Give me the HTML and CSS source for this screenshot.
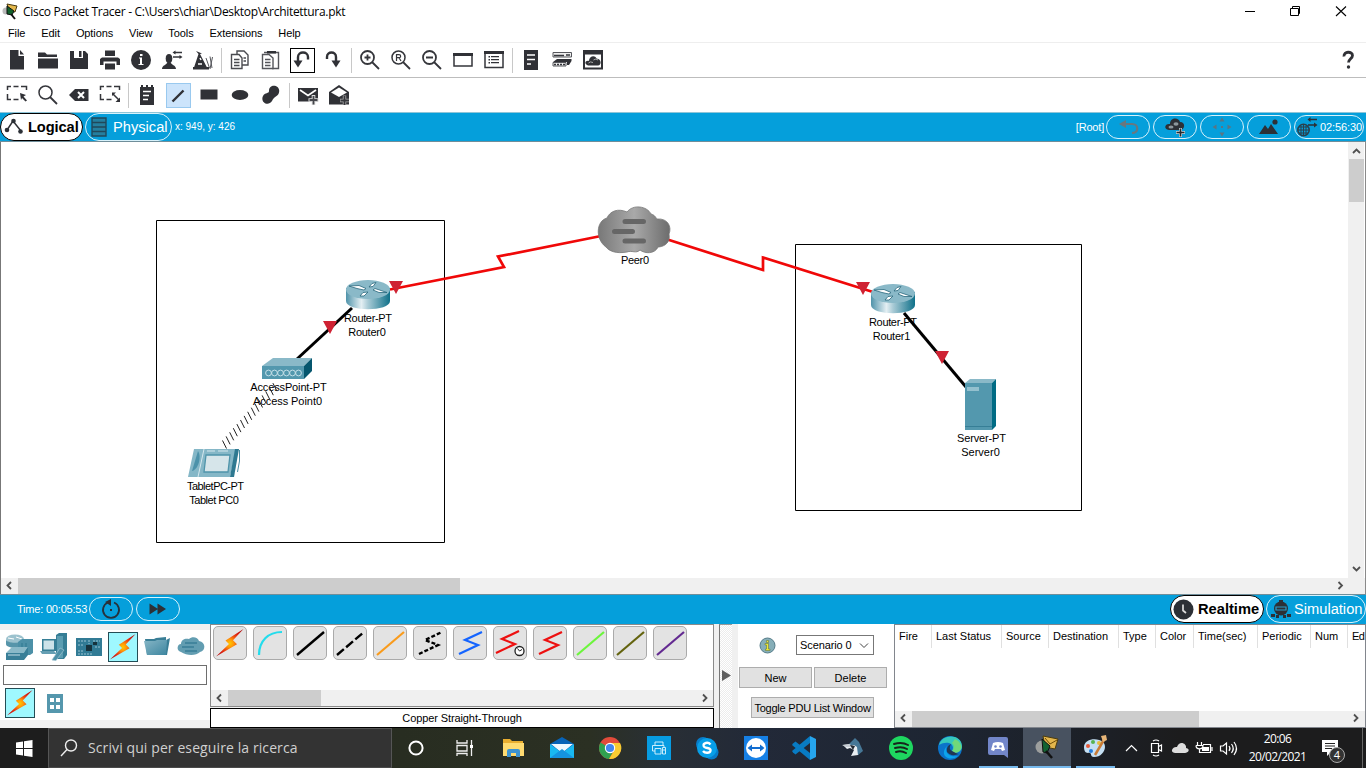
FILE: index.html
```html
<!DOCTYPE html>
<html lang="it">
<head>
<meta charset="utf-8">
<title>Cisco Packet Tracer</title>
<link rel="stylesheet" href="styles.css">
</head>
<body>
<svg class="defs" width="0" height="0">
  <defs>
    <radialGradient id="gBolt" cx=".5" cy=".52" r=".62"><stop offset="0" stop-color="#ffc800"/><stop offset=".22" stop-color="#ff9a08"/><stop offset=".45" stop-color="#f05010"/><stop offset=".7" stop-color="#d81c10"/><stop offset="1" stop-color="#b01010"/></radialGradient>
    <linearGradient id="gRouter"><stop offset="0" stop-color="#4f93aa"/><stop offset=".35" stop-color="#e4eff3"/><stop offset=".5" stop-color="#a9cbd6"/><stop offset="1" stop-color="#0f7089"/></linearGradient>
    <linearGradient id="gCloud"><stop offset="0" stop-color="#787878"/><stop offset=".5" stop-color="#a9a9a9"/><stop offset="1" stop-color="#6c6c6c"/></linearGradient>
    <linearGradient id="gFolder" x1="0" y1="0" x2="1" y2="1"><stop offset="0" stop-color="#87b6c6"/><stop offset="1" stop-color="#3d86a0"/></linearGradient>
    <symbol id="bolt" viewBox="0 0 30 30"><path d="M28.500 1 10.500 12.500 14 16 1 28.500 22 16.300 18 12.300Z" fill="url(#gBolt)"/></symbol>
    <symbol id="router" viewBox="0 0 46 32"><path d="M1 9V22C1 33 45 33 45 22V9Z" fill="url(#gRouter)"/><ellipse cx="23" cy="10.500" rx="22" ry="9.500" fill="#8ab9c8"/><path d="M4 7 14 6.500 21 9.500 19 11 12 9.500Z M42 13.500 34 13.500 28 11 30 9.500 36 11.500ZM31 3.500 28 7.500 24 8 27 4.500ZM15 17 18 13.500 23 13 19 17Z" fill="#fff" stroke="#27677c" stroke-width=".8"/></symbol>
    <symbol id="flag" viewBox="0 0 14 14"><path d="M0 0H14L7 13Z" fill="#cf2233"/></symbol>
  </defs>
</svg>

<div class="window">
  <header class="titlebar">
    <svg class="app-icon" width="17" height="18" viewBox="0 0 17 18"><circle cx="4" cy="8" r="3.500" fill="#bbb"/><path d="M5 1 15 3 13 9 7 8Z" fill="#e4b84c" stroke="#4a3a10"/><path d="M5 3 12 8 10 12 5 11Z" fill="#12612c" stroke="#111"/><path d="M9 11 13 16" stroke="#111" stroke-width="2"/></svg>
    <span class="title">Cisco Packet Tracer - C:\Users\chiar\Desktop\Architettura.pkt</span>
    <svg class="winbtns" width="120" height="23" viewBox="1240 0 120 23" fill="none" stroke="#000"><path d="M1245 10.500H1255M1290.500 7.500H1298.500V14.500H1290.500ZM1292.500 7V5.500H1299.500V12.500H1298.500"/><path d="M1336 5.500 1346 15M1346 5.500 1336 15" stroke-width="1.100"/></svg>
  </header>
  <nav class="menubar"><span>File</span><span>Edit</span><span>Options</span><span>View</span><span>Tools</span><span>Extensions</span><span>Help</span></nav>

  <div class="toolbar">
    <i><svg viewBox="0 0 22 22"><path d="M4 1H12.500V7H18V20.500H4Z"/><path d="M14 1 18 5.500H14Z"/></svg></i>
    <i><svg viewBox="0 0 22 22"><path d="M1 3.500H8L10 5.500H20V8H1ZM1 9.500H21V19.500H1Z"/></svg></i>
    <i><svg viewBox="0 0 22 22"><path d="M2 2H6V9H15V2H17L20 5V20H2Z"/><path d="M11 2H13.500V8H11Z"/></svg></i>
    <i><svg viewBox="0 0 22 22"><path d="M6 1.500H16V7H6ZM1 10 3 8.500H19L21 10V16H17.500V12.500H4.500V16H1ZM6 14.500H16V20.500H6Z"/></svg></i>
    <i><svg viewBox="0 0 22 22"><circle cx="11" cy="11" r="10"/><path d="M9 8.500H12V15H13.500V16H8.500V15H10V9.500H9ZM10 5H12.500V7H10Z" fill="#fff"/></svg></i>
    <i><svg viewBox="0 0 22 22"><ellipse cx="8" cy="9.500" rx="3.300" ry="4.500"/><path d="M1 20C1 16 6 16 6.500 13H9.500C10 16 15 16 15 20Z"/><path d="M13 3.500H21M12 8H19" stroke="#35363b" stroke-width="1.300"/><path d="M11.500 3.500 14.500 1.500V5.500ZM21.500 8 18.500 6V10Z"/></svg></i>
    <i><svg viewBox="0 0 22 22"><path d="M4 2 10 4.500 8 5 15 18.500H2L6.500 5Z"/><path d="M1 18H17V20.500H1Z"/><path d="M14 9 17.500 19M18 7.500 20 19M20.500 8 18 20" stroke="#55565b" fill="none"/><path d="M8 9 9 11M6 15H10" stroke="#fff" stroke-width="1.500"/></svg></i>
    <b></b>
    <i><svg viewBox="0 0 22 22"><g fill="#fff" stroke="#4a4b50" stroke-width="1.400"><path d="M8 2H15L19 6V16H8Z"/><path d="M2.500 5.500H10L13 9V19.500H2.500Z"/><path d="M5 10.500H10.500M5 13.500H10.500M5 16.500H10.500M14.500 9H17M14.500 12H17"/></g></svg></i>
    <i><svg viewBox="0 0 22 22"><g fill="#fff" stroke="#55565b" stroke-width="1.400"><path d="M4 3.500H18.500V19.500H12"/><path d="M2.500 5.500H9L13 9V19.500H2.500Z"/><path d="M5 10.500H10.500M5 13.500H10.500M5 16.500H10.500"/></g><path d="M7 2H16V4.500H7Z"/></svg></i>
    <i class="framed"><svg viewBox="0 0 22 22"><path d="M7 15V8C7 2 17 2 17 8V10.500" class="ln3"/><path d="M2.500 11.500H11.500L7 18.500Z"/></svg></i>
    <i><svg viewBox="0 0 22 22"><path d="M14 15V8C14 2 5 2 5 8V10" class="ln3"/><path d="M9.500 11.500H18.500L14 18.500Z"/></svg></i>
    <b></b>
    <i><svg viewBox="0 0 22 22"><circle cx="8.500" cy="8.500" r="6.500" class="ln2"/><path d="M13 13 20 20M8.500 5.500V11.500M5.500 8.500H11.500" class="ln2"/></svg></i>
    <i><svg viewBox="0 0 22 22"><circle cx="8.500" cy="8.500" r="6.500" class="ln"/><path d="M13 13 20 20" class="ln2"/><path d="M6.500 12V5.700H9C11.200 5.700 11.200 8.700 9 8.700H6.500M9 8.700 11 12" fill="none" stroke="#35363b" stroke-width="1.200"/></svg></i>
    <i><svg viewBox="0 0 22 22"><circle cx="8.500" cy="8.500" r="6.500" class="ln2"/><path d="M13 13 20 20M5 8.500H12" class="ln2"/></svg></i>
    <i><svg viewBox="0 0 22 22"><path d="M2 5H20V17H2Z" class="ln"/><path d="M1 4H21V7H1Z"/></svg></i>
    <i><svg viewBox="0 0 22 22"><path d="M2 3H20V18.500H2Z" class="ln"/><path d="M1 2H21V5H1ZM5.500 7H7V8.500H5.500ZM5.500 10H7V11.500H5.500ZM5.500 13H7V14.500H5.500ZM8 7H16V8.300H8ZM8 10H16V11.300H8ZM8 13H16V14.300H8Z"/></svg></i>
    <b></b>
    <i><svg viewBox="0 0 22 22"><path d="M4 1H18V21H4Z"/><path d="M7 6H15M7 10.500H15M7 15H11" stroke="#fff" stroke-width="1.500"/></svg></i>
    <i><svg viewBox="0 0 22 22"><path d="M2 3.500H20.500V8H2Z" fill="#eee" stroke="#55565b"/><path d="M3 6.500H13M15 6H19" stroke="#35363b" stroke-width="1.300"/><path d="M6 10H20.500V12L18 16H16V13H2Z"/><path d="M2 13.500H15V17H2Z" fill="#eee" stroke="#55565b"/><path d="M3 15.500H14" stroke="#35363b" stroke-width="1.500" stroke-dasharray="2 1"/></svg></i>
    <i><svg viewBox="0 0 22 22"><path d="M1 1H21V20.500H1Z"/><path d="M3 5.500H19V18.500H3Z" fill="#fff"/><path d="M6 16.500C1.500 15 3.500 11 7 12 7 7 13 5.500 14.500 9.500 20 10 19.500 16.500 16 16.500Z"/><path d="M6.500 14Q8 12 11 13.500M11.500 11Q14 9 16 11" stroke="#aaa" fill="none"/></svg></i>
    <span class="grow"></span>
    <svg class="help" viewBox="0 0 14 20"><path d="M3 6.500C2.500 1 11.500 1 11.500 5.500 11.500 8.500 7.500 9 7.500 12.500" fill="none" stroke="#303136" stroke-width="2.800"/><circle cx="7.500" cy="17" r="1.700"/></svg>
  </div>

  <div class="toolbar second">
    <i><svg viewBox="0 0 22 22"><path d="M1.500 6V2.500H5M7.500 2.500H12.500M15 2.500H20.500V6M1.500 10V15.500H5M7.500 15.500H12.500" class="ln"/><path d="M14 9 20 11 17.500 12.500 21 16.500 19.500 17.500 16 14 15 16Z"/></svg></i>
    <i><svg viewBox="0 0 22 22"><circle cx="8.500" cy="8.500" r="6.500" class="ln"/><path d="M13 13 20 20" class="ln2"/></svg></i>
    <i><svg viewBox="0 0 22 22"><path d="M1 11 7 5H20.500V17H7Z"/><path d="M10 8 16 14M16 8 10 14" stroke="#fff" stroke-width="2"/></svg></i>
    <i><svg viewBox="0 0 22 22"><path d="M1.500 6V2.500H5M7.500 2.500H12.500M15 2.500H20.500V6M1.500 10V15.500H5M7.500 15.500H12.500M14 10 20 16" class="ln"/><path d="M13 8.500H17L13 12ZM21 18H16.500L21 13.500Z"/></svg></i>
    <b></b>
    <i><svg viewBox="0 0 22 22"><path d="M4 3H5V1H7V3H10V1H12V3H15V1H17V3H18V21H4Z"/><path d="M7 7.500H15M7 11.500H13M7 15.500H12" stroke="#fff" stroke-width="1.700"/></svg></i>
    <i class="selected"><svg viewBox="0 0 22 22"><path d="M5.500 17.500 16.500 6.500" stroke="#303136" stroke-width="2.400"/></svg></i>
    <i><svg viewBox="0 0 22 22"><path d="M2.500 5.500H19.500V15.500H2.500Z"/></svg></i>
    <i><svg viewBox="0 0 22 22"><ellipse cx="11" cy="11" rx="8.300" ry="5"/></svg></i>
    <i><svg viewBox="0 0 22 22"><path d="M9 7C9-1 21 1 19 8.500 18 13 14 12 12 17 8 23 0 18 3 12 5 8 9 10 9 7Z"/></svg></i>
    <b></b>
    <i><svg viewBox="0 0 22 22"><path d="M1 4H21V17.500H1Z"/><path d="M3 6 11 11.500 19 6" fill="none" stroke="#fff" stroke-width="1.700"/><path d="M16.500 11V21M11.500 16H21.500" stroke="#ddd" stroke-width="3.600"/><path d="M16.500 12V20.500M12.500 16H20.500" stroke="#45464b" stroke-width="1.800"/></svg></i>
    <i><svg viewBox="0 0 22 22"><path d="M1 8 11 1 21 8V20.500H1Z"/><path d="M3 8.500 11 3.500 19 8.500 11 13Z" fill="#fff"/><path d="M16.500 11.500V21M12 16.500H21" stroke="#aaa" stroke-width="3.400"/><path d="M16.500 12V21M12.500 16.500H21" stroke="#35363b" stroke-width="1.800"/></svg></i>
  </div>

  <div class="bluebar top">
    <div class="pill active logical"><svg width="20" height="20" viewBox="0 0 20 20"><path d="M3 13 9 4 17 14" fill="none" stroke="#303136" stroke-width="1.500"/><circle cx="3" cy="13" r="2.300"/><circle cx="9.500" cy="4" r="2.300"/><circle cx="16.500" cy="14.500" r="2.300"/></svg><span>Logical</span></div>
    <div class="pill physical"><svg width="16" height="20" viewBox="0 0 16 20"><path d="M1 1H15V19H1ZM1 5.500H15M1 10H15M1 14.500H15" fill="#247f9f" stroke="#20485a" stroke-width="1.400"/></svg><span>Physical</span></div>
    <span class="coords">x: 949, y: 426</span>
    <span class="grow"></span>
    <span class="root">[Root]</span>
    <div class="oval"><svg viewBox="0 0 42 22"><path d="M18 8H25C32 8 32 17 25 17" fill="none" stroke="#687780" stroke-width="2.200"/><path d="M12 8 19 4V12Z" fill="#687780"/></svg></div>
    <div class="oval"><svg viewBox="0 0 42 22"><path d="M15 14C9 13 11 7 16 8 16 1 25 1 26 6 32 6 31 14 26 14Z"/><ellipse cx="17" cy="11" rx="2.500" ry="1.500" fill="#8c979d"/><ellipse cx="22" cy="8" rx="2.500" ry="1.700" fill="#8c979d"/><path d="M26.500 12V21M22 16.500H31" stroke="#c4d8df" stroke-width="3"/><path d="M26.500 12.500V20.500M22.500 16.500H30.500" stroke="#252a30" stroke-width="1.600"/></svg></div>
    <div class="oval"><svg viewBox="0 0 42 22" fill="#5a7584"><path d="M21 1.500 23.500 5.500H18.500ZM21 20.500 23.500 16.500H18.500ZM11.500 11 15.500 8.500V13.500ZM30.500 11 26.500 8.500V13.500ZM20 10H22V12H20Z"/></svg></div>
    <div class="oval"><svg viewBox="0 0 42 22"><path d="M11 18 17 9 20 13 23 8 30 18Z"/><circle cx="27" cy="6" r="2.600"/></svg></div>
    <div class="oval clock"><svg width="22" height="20" viewBox="0 0 22 20"><circle cx="7.500" cy="13" r="5.700" fill="none" stroke="#2b3f4b" stroke-width="1.500"/><path d="M2 13H13M3 10H12M3 16H12M7.500 7.500V18.500M5 8.500V17.500M10 8.500V17.500" stroke="#2b3f4b"/><path d="M13 2.500H21M12 8H19" stroke="#2b3038" stroke-width="1.500"/><path d="M11.500 2.500 14.500 0V5ZM21.500 8 18 5.500V10.500Z"/></svg><span>02:56:30</span></div>
  </div>

  <main class="workspace">
    <div class="work-row">
      <svg class="canvas" viewBox="1 142 1347 436" width="1347" height="436">
        <g fill="none" stroke="#000"><path d="M156.500 220.500H444.500V542.500H156.500Z"/><path d="M795.500 244.500H1081.500V510.500H795.500Z"/></g>
        <g fill="none" stroke="#f00808" stroke-width="2.700"><path d="M390 289.500 504 267 498 256.500 601 236"/><path d="M666 239 763 270 763 257.500 873 292"/></g>
        <path d="M352 308 297 359" stroke="#000" stroke-width="3"/>
        <g class="lbl"><text x="368" y="322" textLength="48">Router-PT</text><text x="367" y="336" textLength="37.500">Router0</text><text x="288.500" y="391" textLength="76.500">AccessPoint-PT</text><text x="287.500" y="405" textLength="69">Access Point0</text><text x="215.500" y="490" textLength="57">TabletPC-PT</text><text x="214" y="504" textLength="49.500">Tablet PC0</text><text x="635" y="264" textLength="28">Peer0</text><text x="893" y="326" textLength="48">Router-PT</text><text x="891.500" y="340" textLength="37.500">Router1</text><text x="981.500" y="442" textLength="49">Server-PT</text><text x="980.500" y="456" textLength="38.500">Server0</text></g>
        <path d="M904 313 966 387" stroke="#000" stroke-width="3"/>
        <path d="M222.500 440.500l4 8m-.400-12.100l4 8m-.400-12.100l4 8m-.400-12.100l4 8m-.400-12.100l4 8m-.400-12.100l4 8m-.400-12.100l4 8m-.400-12.100l4 8m-.400-12.100l4 8m-.400-12.100l4 8m-.400-12.100l4 8m-.400-12.100l4 8m-.400-12.100l4 8m-.400-12.100l4 8m-.400-12.100l4 8" fill="none" stroke="#222"/>
        <use href="#router" x="345" y="279" width="46" height="32"/>
        <use href="#router" x="870" y="283" width="46" height="32"/>
        <use href="#flag" x="389" y="281" width="14" height="14"/>
        <use href="#flag" x="323" y="321" width="14" height="14"/>
        <use href="#flag" x="856" y="282" width="14" height="14"/>
        <use href="#flag" x="935" y="351" width="14" height="14"/>
        <path d="M262 366 273 358H312L304 366Z" fill="#8ab9c8"/><path d="M262 366H304V379H262Z" fill="#5398ae"/><path d="M304 366 312 358V371L304 379Z" fill="#05566e"/>
        <g fill="none" stroke="#c4dfe8"><circle cx="268.500" cy="373" r="2.900"/><circle cx="274.500" cy="373" r="2.900"/><circle cx="280.500" cy="373" r="2.900"/><circle cx="286.500" cy="373" r="2.900"/><circle cx="292.500" cy="373" r="2.900"/><circle cx="298.500" cy="373" r="2.900"/></g>
        <path d="M194 449H236L230 477H188Z" fill="#85b7c7"/><path d="M235 449H239L234 477H230Z" fill="#2e7991"/><path d="M239.500 450V461L237.500 472" fill="none" stroke="#4b8fa6"/><path d="M198 451C202 457 198 470 192 471Z" fill="#4c92aa"/><path d="M204 449 198 477M207 451H215M218 451H228" stroke="#d6e8ee"/><path d="M206 455H230L228 472H204Z" fill="#d6e5ea" stroke="#4f94aa" stroke-width="1.300"/>
        <path d="M606 247C595 239 596 221 607 218 610 211 618 208 627 212 633 204 647 206 651 214 655 215 656 218 657 219 668 218 672 227 669 234 671 245 661 247 658 247 655 254 645 254 640 250 636 254 632 250 627 252 616 254 609 251 606 247Z" fill="url(#gCloud)" stroke="#777" stroke-width=".8"/>
        <path d="M625 221.500H643.500M614.500 231.500H632.500M625 241H643.500" stroke="#666" stroke-width="5" stroke-linecap="round"/>
        <path d="M965 383 970 379H996L992 383Z" fill="#8ab9c8"/><path d="M965 383H992V430H965Z" fill="#5398ae"/><path d="M992 383 996 379V426L992 430Z" fill="#006b84"/><path d="M967 387H979V391H967Z" fill="#93c0ce"/><path d="M965 426.500H992" stroke="#367e96"/>
      </svg>
      <div class="vscroll"><svg width="16" height="17" viewBox="0 0 16 17"><path d="M5 11 8.500 7.500 12 11" class="arr"/></svg><div class="vthumb"></div><span class="grow"></span><svg width="16" height="17" viewBox="0 0 16 17"><path d="M5 6 8.500 9.500 12 6" class="arr"/></svg></div>
    </div>
    <div class="hscroll"><svg width="17" height="16" viewBox="0 0 17 16"><path d="M10 4 6.500 7.500 10 11" class="arr"/></svg><div class="hthumb"></div><span class="grow"></span><svg width="17" height="16" viewBox="0 0 17 16"><path d="M6.500 4 10 7.500 6.500 11" class="arr"/></svg><span class="corner"></span></div>
  </main>

  <div class="bluebar lower">
    <span class="time">Time: 00:05:53</span>
    <div class="oval"><svg viewBox="0 0 42 22"><path d="M18 4.500A8 8 0 1 0 24 4.500" fill="none" stroke="#26323c" stroke-width="1.800"/><path d="M15 4 21 1V8ZM20 11H22V13H20Z"/></svg></div>
    <div class="oval"><svg viewBox="0 0 42 22"><path d="M12.500 5.500 21 11 12.500 16.500ZM20.500 5.500 29 11 20.500 16.500Z"/></svg></div>
    <span class="grow"></span>
    <div class="pill active realtime"><svg width="21" height="21" viewBox="0 0 21 21"><circle cx="10.500" cy="10.500" r="10"/><path d="M10 5.500V11.500L13 14" fill="none" stroke="#ddd" stroke-width="1.700"/></svg><span>Realtime</span></div>
    <div class="pill simulation"><svg width="20" height="20" viewBox="0 0 20 20"><path d="M0 15H4V18H0ZM5 16H8V19H5ZM12 16H15V19H12ZM16 15H20V18H16Z"/><circle cx="10" cy="9.500" r="7"/><path d="M8 1H12V4H8Z"/><path d="M5 8H15V11H5Z" stroke="#2b9cc8" stroke-width="1.200"/></svg><span>Simulation</span></div>
  </div>

  <section class="bottom">
    <div class="devices">
      <div class="devwrap">
        <div class="devrow">
          <svg viewBox="0 0 30 30"><ellipse cx="10" cy="7" rx="9" ry="4.500" fill="#9cc2ce"/><path d="M1 7V12C1 17 19 17 19 12V7C19 12 1 12 1 7Z" fill="#5795aa"/><path d="M3 6 9 7M11 5 17 7" stroke="#fff"/><path d="M13 10 17 7H28V21L25 23H13Z" fill="#4c90a7"/><path d="M17 11V20M21 11V20" stroke="#2f7890"/><path d="M1 21 7 15H23L19 21Z" fill="#8ab9c8"/><path d="M1 21H19V28H1ZM19 21 23 15V23L19 28Z" fill="#397f98"/><path d="M3 23H15" stroke="#c5dfe7"/></svg>
          <svg viewBox="0 0 30 30"><path d="M17 3 20 1H28V23L25 27H17Z" fill="#367e96"/><path d="M18 4H24V26H18Z" fill="#5b9db2"/><path d="M3 7H17V19H3Z" fill="#367e96"/><path d="M4.500 8.500H15V17.500H4.500Z" fill="#cce2e9"/><path d="M1 19H15L18 22H3Z" fill="#669fb3"/><path d="M13 28 21 16 25 18 17 28.500Z" fill="#4c90a7" stroke="#9cc2ce" stroke-width=".7"/></svg>
          <svg viewBox="0 0 30 30"><path d="M2 6H28V24H2Z" fill="#317b95"/><path d="M4 9H12M15 8V12M19 9H26M4 13H9M21 15H26M4 19H9M4 22H18" stroke="#9bc5d3" stroke-dasharray="2 1"/><path d="M12 13H18V19H12ZM19 10H23V13H19Z" fill="#17333d"/></svg>
          <span class="boltbox"><svg viewBox="0 0 30 30"><use href="#bolt"/></svg></span>
          <svg viewBox="0 0 30 30"><path d="M3 7H12L14 6 24 5V8L28 6 25 23H5Z" fill="#397e96"/><path d="M2 9H13L15 8H25L24 23H5Z" fill="url(#gFolder)"/></svg>
          <svg viewBox="0 0 30 30"><path d="M5 20C0 19 1 12 5 12 5 7 10 6 13 7 16 4 22 5 23 9 30 10 30 19 24 20 20 24 11 24 5 20Z" fill="#629db1"/><path d="M9 11H21M6 15H18M9 19H21" stroke="#397e96" stroke-width="1.600"/></svg>
        </div>
        <div class="filter"></div>
        <div class="devrow second-row"><span class="boltbox"><svg viewBox="0 0 30 30"><use href="#bolt"/></svg></span><svg class="grid-icon" viewBox="0 0 16 19"><path d="M0 0H16V19H0Z" fill="#5597ad"/><path d="M3 4H7V8H3ZM9 4H13V8H9ZM3 11H7V15H3ZM9 11H13V15H9Z" fill="#fff"/></svg></div>
      </div>
    </div>

    <div class="cables">
      <div class="cable-list">
        <div class="cable-row">
          <span><svg viewBox="0 0 32 32"><use href="#bolt" x="1" y="1" width="30" height="30"/></svg></span>
          <span><svg viewBox="0 0 32 32"><path d="M5 28C5 14 14 5 28 5" stroke="#23dcec" stroke-width="2.200"/></svg></span>
          <span><svg viewBox="0 0 32 32"><path d="M3 28 30 5" stroke="#000" stroke-width="2.400"/></svg></span>
          <span><svg viewBox="0 0 32 32"><path d="M3 28 30 5" stroke="#000" stroke-width="2.400" stroke-dasharray="9 3"/></svg></span>
          <span><svg viewBox="0 0 32 32"><path d="M3 28 30 5" stroke="#f99b1c" stroke-width="2.200"/></svg></span>
          <span><svg viewBox="0 0 32 32"><path d="M5 27 24 18 11 13 28 5" stroke="#000" stroke-width="2.400" stroke-dasharray="4 2"/></svg></span>
          <span><svg viewBox="0 0 32 32"><path d="M5 27 24 18 11 13 28 5" stroke="#1464ff" stroke-width="2.200"/></svg></span>
          <span><svg viewBox="0 0 32 32"><path d="M2 26 21 17 8 12 25 4" stroke="#ed1010" stroke-width="2.200"/><circle cx="25.500" cy="24" r="4.500" fill="#fff" stroke="#222" stroke-width="1.300"/><path d="M23.500 21.500 25.500 24 28 22.500" stroke="#222"/></svg></span>
          <span><svg viewBox="0 0 32 32"><path d="M5 27 24 18 11 13 28 5" stroke="#ed1010" stroke-width="2.200"/></svg></span>
          <span><svg viewBox="0 0 32 32"><path d="M3 28 30 5" stroke="#6cf53c" stroke-width="2.200"/></svg></span>
          <span><svg viewBox="0 0 32 32"><path d="M3 28 30 5" stroke="#64640f" stroke-width="2.200"/></svg></span>
          <span><svg viewBox="0 0 32 32"><path d="M3 28 30 5" stroke="#632a91" stroke-width="2.200"/></svg></span>
        </div>
        <div class="hscroll"><svg width="17" height="16" viewBox="0 0 17 16"><path d="M10 4.500 6.500 8 10 11.500" class="arr"/></svg><div class="cthumb"></div><span class="grow"></span><svg width="17" height="16" viewBox="0 0 17 16"><path d="M7 4.500 10.500 8 7 11.500" class="arr"/></svg></div>
      </div>
      <div class="cable-name">Copper Straight-Through</div>
    </div>

    <div class="splitter"><svg width="9" height="11" viewBox="0 0 9 11"><path d="M0 0 9 5.500 0 11Z" fill="#606060"/></svg></div>

    <div class="scenario">
      <div class="sc-top"><svg width="17" height="17" viewBox="0 0 17 17"><circle cx="8.500" cy="8.500" r="7.500" fill="#86aeb8" stroke="#557c89"/><path d="M6 6.500H9.500V12H11V13.500H6.500V12H7.500V8H6ZM7.500 3.500H9.500V5.500H7.500Z" fill="#ede936" stroke="#5d6b30" stroke-width=".5"/></svg><div class="select"><span>Scenario 0</span><svg width="10" height="7" viewBox="0 0 10 7"><path d="M1 1.500 5 5.500 9 1.500" fill="none" stroke="#444"/></svg></div></div>
      <div class="sc-btns"><div class="btn">New</div><div class="btn">Delete</div></div>
      <div class="btn toggle">Toggle PDU List Window</div>
    </div>

    <div class="pdu">
      <div class="thead"><span>Fire</span><span>Last Status</span><span>Source</span><span>Destination</span><span>Type</span><span>Color</span><span>Time(sec)</span><span>Periodic</span><span>Num</span><span>Ed</span></div>
      <div class="hscroll"><svg width="17" height="16" viewBox="0 0 17 16"><path d="M10 3.500 6.500 7 10 10.500" class="arr"/></svg><div class="pthumb"></div><span class="grow"></span><svg width="17" height="16" viewBox="0 0 17 16"><path d="M6 3.500 9.500 7 6 10.500" class="arr"/></svg></div>
    </div>
  </section>
</div>

<footer class="taskbar">
  <div class="start"><svg width="17" height="17" viewBox="0 0 17 17"><path d="M0 2.500 7 1.500V8H0ZM8 1.300 16.500 0V8H8ZM0 9H7V15.500L0 14.500ZM8 9H16.500V17L8 15.700Z" fill="#fff"/></svg></div>
  <div class="search"><svg width="18" height="18" viewBox="0 0 18 18"><circle cx="11" cy="6.500" r="5.500" fill="none" stroke="#eee" stroke-width="1.400"/><path d="M7 10.500 1 17" stroke="#eee" stroke-width="1.400"/></svg><span>Scrivi qui per eseguire la ricerca</span></div>
  <div class="apps">
    <a><svg viewBox="0 0 24 24"><circle cx="12" cy="12" r="6.600" fill="none" stroke="#fff" stroke-width="2"/></svg></a>
    <a><svg viewBox="0 0 24 24"><path d="M4 4V7H14V4M4 20V17.500H14V20M4 9.500H14V15H4ZM18.500 4V20" fill="none" stroke="#eee" stroke-width="1.300"/><path d="M17 9H20V12H17Z" fill="#fff"/></svg></a>
    <a><svg viewBox="0 0 24 24"><path d="M2 3H9L11 5H22V20H2Z" fill="#e9ae30"/><path d="M2 7H23V20H2Z" fill="#ffdb70"/><path d="M6 21V15Q6 13 8 13H17Q19 13 19 15V21H15V17H10V21Z" fill="#3d93d0"/></svg></a>
    <a><svg viewBox="0 0 24 24"><path d="M0 8 12 1 24 8V22H0Z" fill="#0763b7"/><path d="M1 8H23L12 17Z" fill="#eef8ff"/><path d="M0 8 12 17 24 8V22H0Z" fill="#19b8f0"/><path d="M0 22 12 13 24 22Z" fill="#1593df"/></svg></a>
    <a><svg viewBox="0 0 24 24"><circle cx="12" cy="12" r="11" fill="#e24b3b"/><path d="M12 12 2.500 6.500A11 11 0 0 0 11 23L16 14Z" fill="#30a150"/><path d="M12 7H22A11 11 0 0 1 11 23L16.500 14Z" fill="#f8cb31"/><circle cx="12" cy="12" r="5.200" fill="#fff"/><circle cx="12" cy="12" r="4.100" fill="#4386ef"/></svg></a>
    <a><svg viewBox="0 0 24 24"><path d="M0 0H24V24H0Z" fill="#079be1"/><path d="M8 9V6H16V9M5.500 15V9.500H17V11M8 15H5.500M8 12.500H14V18H8ZM15.500 11.500H18.500V18H15.500ZM16 14H18" fill="none" stroke="#dff5ff" stroke-width=".9"/></svg></a>
    <a><svg viewBox="0 0 24 24"><circle cx="8" cy="8" r="7" fill="#087cc9"/><circle cx="16.500" cy="16.500" r="7" fill="#087cc9"/><circle cx="12" cy="12" r="10" fill="#079fe8"/><path d="M15.500 8.500C13 5.500 8 7 8.700 10 9.500 13 16 11 15.500 14.500 15 17.500 10 17.500 8 15" fill="none" stroke="#fff" stroke-width="2.400"/></svg></a>
    <a><svg viewBox="0 0 24 24"><path d="M0 0H24V24H0Z" fill="#1680e6"/><circle cx="12" cy="12" r="10" fill="#fff"/><path d="M3.500 12 8 8.500V11H16V8.500L20.500 12 16 15.500V13H8V15.500Z" fill="#116dd0"/></svg></a>
    <a><svg viewBox="0 0 24 24"><path d="M1 7.500 3.500 5.500 18 17V24L0 9Z" fill="#087bc3"/><path d="M1 16.500 3.500 18.500 18 7V0L0 15Z" fill="#087bc3"/><path d="M18 0 24 3V21L18 24Z" fill="#26a5ed"/></svg></a>
    <a><svg viewBox="0 0 24 24"><path d="M2 9 9 8 14 3 17 7 20 14 17 19 10 20 13 14 9 12 6 13Z" fill="#e9eef2"/><path d="M8 8 14 2 18 6 22 15 17 19 16 11 13 9 9 10Z" fill="#467796"/><path d="M1 9 9 8 11 11 5 11Z" fill="#c5cbd2"/><path d="M9 9 14 10 12 14Z" fill="#252a32"/></svg></a>
    <a><svg viewBox="0 0 24 24"><circle cx="12" cy="12" r="12" fill="#1ed760"/><path d="M5 8Q13 5.500 19 9M6 12Q13 10 18 13M7 16Q12 14 17 17" fill="none" stroke="#17251d" stroke-width="2" stroke-linecap="round"/></svg></a>
    <a><svg viewBox="0 0 24 24"><circle cx="12" cy="12" r="12" fill="#0b73ca"/><path d="M1 9C4-3 24-2 24 10 24 17 16 17 14 15 18 8 9 4 1 9Z" fill="#36c7bd"/><path d="M17 3C27 8 24 17 17 17L14 15Q18 11 14 7Z" fill="#71d879"/><path d="M10 9C5 14 10 22 20 20 10 27 0 18 10 9Z" fill="#0ca4ec"/><path d="M14 15Q10 13 13 8 8 10 9 16 13 21 21 18 19 18 14 15Z" fill="#203653"/></svg></a>
    <a class="running"><svg viewBox="0 0 24 24"><path d="M4 2H20Q22 2 22 4V23L18 20H4Q2 20 2 18V4Q2 2 4 2Z" fill="#7286c9"/><path d="M7 8Q12 6 17 8L19 15 16 16 15 14H9L8 16 5 15Z" fill="#fff"/><circle cx="9.500" cy="11.500" r="1.300" fill="#7286c9"/><circle cx="14.500" cy="11.500" r="1.300" fill="#7286c9"/></svg></a>
    <a class="running current"><svg viewBox="0 0 24 24"><circle cx="7" cy="12" r="6.500" fill="#9c9e9d"/><path d="M8 1 23 4 20 14 10 12Z" fill="#e3b64c" stroke="#4d3c0d"/><path d="M10 3 15 9 22 5" fill="none" stroke="#6d4c08"/><path d="M7 4 15 11 12 18 8 17Z" fill="#136332" stroke="#111"/><path d="M11 16 17 23" stroke="#111" stroke-width="2.500"/></svg></a>
    <a class="running"><svg viewBox="0 0 24 24"><path d="M1 12C1 4 14 2 20 7 25 12 20 22 11 22 6 22 10 17 5 18 2 18 1 15 1 12Z" fill="#c5e0f4"/><circle cx="5" cy="11" r="2" fill="#e55a3a"/><circle cx="10" cy="7" r="2" fill="#58b350"/><circle cx="16" cy="8" r="2" fill="#e8bd3b"/><circle cx="8" cy="16" r="2" fill="#237bdb"/><path d="M22 3 12 20" stroke="#c87b37" stroke-width="2.500"/><path d="M18 1 23 0 24 5 20 7Z" fill="#e6b578"/></svg></a>
  </div>
  <span class="grow"></span>
  <svg class="tray" width="120" height="40" viewBox="1125 728 120 40" fill="none" stroke="#fff" stroke-width="1.200"><path d="M1129 751 1134.500 745.500 1140 751"/><path d="M1154.500 743.500H1161.500V752.500H1154.500ZM1161.500 746.500 1164.500 745V751L1161.500 749.500M1156 741Q1159 739 1162 741M1156 755Q1159 757 1162 755"/><path d="M1178 753C1172 752 1176 746 1180 747 1182 740 1190 743 1189 748 1194 749 1191 753 1188 753Z" fill="#ddd" stroke="none"/><path d="M1206 744.500H1213.500V752.500H1203M1200.500 742V745M1204.500 742V745M1199 745.500H1206C1206 750 1199 750 1199 745.500M1202.500 749V753M1215 747V751"/><path d="M1205 747H1212V751H1205Z" fill="#fff" stroke="none"/><path d="M1223.500 746V751H1226L1229.500 754V743L1226 746ZM1232 746Q1234 748.500 1232 751M1234.500 744Q1238 748.500 1234.500 753M1237 742Q1242 748.500 1237 755"/></svg>
  <div class="datetime"><span>20:06</span><span>20/02/2021</span></div>
  <div class="notify"><svg width="17" height="17" viewBox="0 0 17 17"><path d="M0 0H16V12H9L5 16V12H0Z" fill="#fff"/><path d="M3 3.500H13M3 6H13M3 8.500H10" stroke="#252525"/></svg><span class="badge">4</span></div>
</footer>
</body>
</html>
```

FILE: styles.css
```css
* { box-sizing: border-box; }
body { margin: 0; width: 1366px; height: 768px; overflow: hidden; background: #fff; color: #000; font: 11px/14px "Liberation Sans", sans-serif; display: flex; flex-direction: column; }
svg { display: block; flex: none; }
.defs { position: absolute; }
.grow { flex: 1; }
.window { height: 728px; display: flex; flex-direction: column; }
.titlebar { height: 24px; display: flex; align-items: center; padding-left: 2px; }
.title { margin-left: 4px; flex: 1; font: 12px/16px "Open Sans", sans-serif; letter-spacing: -0.3px; }
.winbtns { margin-right: 6px; }
.menubar { height: 19px; border-bottom: 1px solid #eee; display: flex; padding: 2px 0 0 8px; gap: 16px; letter-spacing: -0.1px; }
.toolbar { height: 35px; border-bottom: 1px solid #bdbdbd; display: flex; align-items: center; padding-left: 1.5px; fill: #303136; }
.toolbar.second { border-bottom-color: #8fc5d8; }
.toolbar i { width: 31px; height: 26px; flex: none; display: flex; align-items: center; justify-content: center; }
.toolbar i svg { width: 22px; height: 22px; }
.toolbar b { width: 6px; flex: none; height: 25px; border-left: 1px solid #c8c8c8; margin-left: 2px; margin-right: -2px; }
.toolbar i.framed, .toolbar i.selected { width: 25px; height: 25px; margin: 0 3px; border: 1px solid #000; }
.toolbar i.selected { background: #cce4fb; border-color: #99c9ef; }
.ln { fill: none; stroke: #35363b; stroke-width: 1.5; }
.ln2 { fill: none; stroke: #35363b; stroke-width: 1.8; }
.ln3 { fill: none; stroke: #303136; stroke-width: 2.4; }
.arr { fill: none; stroke: #505050; stroke-width: 1.8; }
.help { width: 14px; height: 20px; margin-right: 11px; }
.bluebar { height: 29px; flex: none; background: #059fdb; color: #fff; display: flex; align-items: center; fill: #2c3036; }
.bluebar.top { border-bottom: 1px solid #708e9a; }
.bluebar.lower { height: 30px; border-top: 1px solid #708e9a; padding-bottom: 1px; }
.pill { height: 28px; border: 1px solid #d8f2fb; border-radius: 14px; display: flex; align-items: center; font-size: 14.67px; line-height: 18px; white-space: nowrap; }
.pill.active { background: #fff; border: 1.5px solid #000; color: #000; font-weight: bold; }
.logical { width: 83px; padding-left: 3px; gap: 4px; letter-spacing: -0.1px; }
.physical { width: 87px; margin-left: 2px; padding-left: 5px; gap: 6px; }
.coords { margin-left: 3px; font-size: 10px; }
.oval { width: 44px; height: 24px; flex: none; border: 1px solid #d8f2fb; border-radius: 12px; margin-right: 3px; display: flex; align-items: center; }
.root { margin-right: 2px; letter-spacing: -0.2px; }
.oval.clock { width: 70px; margin-right: 2px; padding-left: 1px; }
.clock span { margin-left: 2px; letter-spacing: -0.1px; }
.workspace { height: 452px; flex: none; border-left: 1px solid #777; border-right: 1px solid #8a8a8a; display: flex; flex-direction: column; }
.work-row { height: 436px; display: flex; }
.canvas .lbl { font-size: 11px; text-anchor: middle; }
.vscroll { width: 16px; height: 436px; background: #f0f0f0; display: flex; flex-direction: column; }
.vthumb { height: 43px; background: #cdcdcd; margin: 0 0 0 1px; }
.hscroll { height: 16px; background: #f0f0f0; display: flex; flex: none; }
.hthumb { width: 442px; background: #cdcdcd; }
.corner { width: 16px; }
.time { margin-left: 17px; width: 71px; letter-spacing: -0.2px; white-space: nowrap; margin-right: 1px; }
.realtime { width: 94px; padding-left: 2px; gap: 4px; margin-right: 2px; }
.simulation { width: 100px; padding-left: 4px; gap: 3px; }
.bottom { height: 104px; display: flex; flex: none; background: #f0f0f0; }
.devices { width: 210px; flex: none; padding-top: 6px; }
.devwrap { background: #fff; height: 90px; padding: 2px 3px; }
.devrow { display: flex; align-items: center; height: 30px; padding-left: 2px; gap: 4.3px; }
.devrow svg { width: 30px; height: 30px; }
.boltbox { width: 30px; height: 30px; flex: none; border: 1px solid #244d56; background: #9ff8ff; }
.devrow .boltbox svg { width: 28px; height: 28px; }
.filter { height: 20px; width: 204px; border: 1px solid #6e6e6e; margin: 3px 0; background: #fff; }
.devrow .grid-icon { width: 16px; height: 19px; margin-left: 8px; }
.cables { width: 504px; flex: none; display: flex; flex-direction: column; }
.cable-list { height: 83px; background: #fff; border: 1px solid #8a8a8a; display: flex; flex-direction: column; justify-content: space-between; }
.cable-row { display: flex; gap: 6px; padding: 1px 2px; }
.cable-row span { width: 34px; height: 34px; flex: none; border: 1px solid #aaa; border-radius: 5px; background: #e3e3e3; }
.cable-row svg { width: 32px; height: 32px; fill: none; }
.cthumb { width: 93px; background: #cdcdcd; }
.cable-name { height: 20px; margin-top: 1px; border: 1px solid #000; background: #fff; text-align: center; line-height: 19px; letter-spacing: -0.1px; }
.splitter { width: 13px; margin: 0 6px 0 5px; border-left: 1px solid #777; border-top: 1px solid #999; background: repeating-conic-gradient(#fff 0 25%, #ececec 0 50%) 0 0 / 2px 2px; display: flex; align-items: center; padding: 0 0 3px 2px; }
.scenario { width: 156px; flex: none; background: #fff; padding: 11px 0 0 1px; }
.sc-top { display: flex; height: 20px; align-items: center; padding-left: 20px; gap: 20px; }
.select { width: 78px; height: 20px; border: 1px solid #777; display: flex; align-items: center; justify-content: space-between; padding: 0 4px 0 3px; letter-spacing: -0.1px; }
.sc-btns { display: flex; gap: 2px; margin-top: 12px; }
.btn { width: 73px; height: 21px; border: 1px solid #adadad; background: #e1e1e1; text-align: center; line-height: 21px; }
.btn.toggle { width: 123px; margin: 9px 0 0 12px; white-space: nowrap; letter-spacing: -0.22px; }
.pdu { flex: 1; min-width: 0; background: #fff; border: 1px solid #82868d; display: flex; flex-direction: column; justify-content: space-between; overflow: hidden; }
.thead { display: flex; height: 23px; }
.thead span { flex: none; border-right: 1px solid #e0e0e0; padding: 4px 0 0 4px; overflow: hidden; white-space: nowrap; }
.thead span:nth-child(1) { width: 37px; }
.thead span:nth-child(2) { width: 70px; }
.thead span:nth-child(3) { width: 47px; }
.thead span:nth-child(4) { width: 70px; }
.thead span:nth-child(5) { width: 37px; }
.thead span:nth-child(6) { width: 38px; }
.thead span:nth-child(7) { width: 64px; }
.thead span:nth-child(8) { width: 53px; }
.thead span:nth-child(9) { width: 37px; }
.thead span:nth-child(10) { width: 17px; border: 0; letter-spacing: -0.5px; }
.pthumb { width: 287px; background: #cdcdcd; }
.taskbar { height: 40px; flex: none; display: flex; background: linear-gradient(90deg, #1c1e1c 0, #282d21 400px, #2b3023 590px, #292f35 660px, #222938 760px, #1d2532 950px, #1c1f25 1110px, #1c1c1d 1180px); color: #fff; font-family: "Open Sans", sans-serif; }
.start { width: 48px; background: #1d1d1d; display: flex; align-items: center; justify-content: center; }
.search { width: 344px; background: #333; border: 1px solid #555; border-bottom-color: #4a4a4a; color: #d0d0d0; display: flex; align-items: center; padding-left: 11px; gap: 10px; font-size: 14px; letter-spacing: 0.1px; white-space: nowrap; }
.apps { display: flex; }
.apps a { width: 48.5px; height: 40px; display: flex; align-items: center; justify-content: center; }
.apps svg { width: 24px; height: 24px; }
.apps .running { width: 39px; margin: 0 4.75px; border-bottom: 2px solid #76b9ed; }
.apps .current { width: 48px; margin: 0 .25px; background: #485260; }
.datetime { width: 68px; display: flex; flex-direction: column; align-items: center; font-size: 12px; line-height: 18px; padding: 2px 0 0 3px; letter-spacing: -0.6px; white-space: nowrap; }
.notify { width: 53px; padding: 12px 0 0 12px; position: relative; border-right: 1px solid #666; margin-right: 3px; }
.badge { position: absolute; left: 19px; top: 19px; width: 16px; height: 16px; border-radius: 50%; border: 1px solid #aaa; background: #333; font-size: 11px; line-height: 14px; text-align: center; }
```
